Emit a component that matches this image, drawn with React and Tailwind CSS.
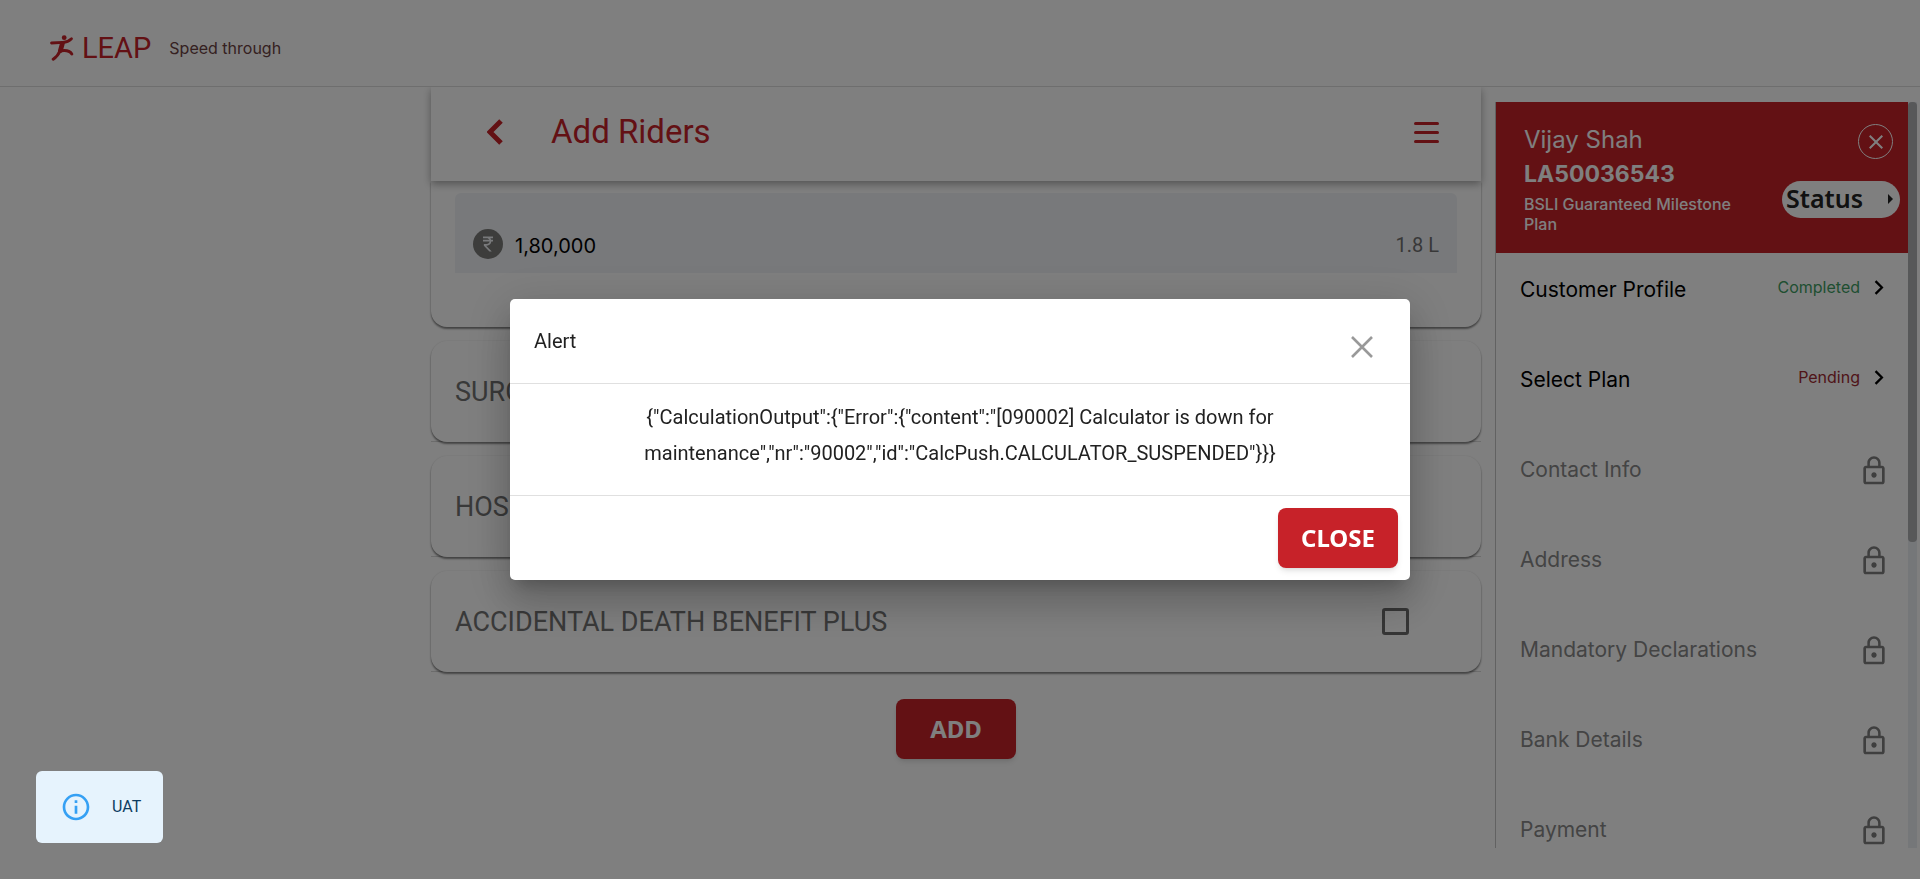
import React from "react";
import { MdClose, MdLockOutline, MdInfoOutline, MdCurrencyRupee } from "react-icons/md";

const MENU = [
  { label: "Customer Profile", status: "Completed" },
  { label: "Select Plan", status: "Pending" },
  { label: "Contact Info" },
  { label: "Address" },
  { label: "Mandatory Declarations" },
  { label: "Bank Details" },
  { label: "Payment" },
];

const RIDERS = ["SURGICAL CARE", "HOSPITAL CARE", "ACCIDENTAL DEATH BENEFIT PLUS"];

const display = "font-['Roboto',sans-serif]";
const humanist = "font-['Noto_Sans',sans-serif]";

function Chevron({ className, flip }) {
  return (
    <svg viewBox="0 0 16 26" className={className} fill="none" stroke="currentColor" strokeWidth={flip ? 4 : 5} aria-hidden="true">
      <path d={flip ? "M2 2 L13 13 L2 24" : "M14 2 L3 13 L14 24"} />
    </svg>
  );
}

function Runner() {
  return (
    <svg viewBox="0 0 24 26" className="h-[26px] w-6" fill="none" stroke="currentColor" strokeLinecap="round" strokeLinejoin="round" aria-hidden="true">
      <circle cx="14.2" cy="2.7" r="2.4" fill="currentColor" stroke="none" />
      <path d="M1.5 8 L13 7.4 Q18 7.2 21.5 3.8" strokeWidth="2.8" />
      <path d="M12.4 8.4 L10.4 15.6" strokeWidth="4.8" />
      <path d="M10.2 15.5 Q8 21 3.2 24.2" strokeWidth="3" />
      <path d="M11 15.8 Q19 14.5 21.8 19" strokeWidth="3" />
    </svg>
  );
}

function Header() {
  return (
    <header className="flex h-[87px] items-center border-b border-[#dcdcdc] px-[50px] pt-2.5">
      <div className="flex items-center gap-2 text-[#c72229]">
        <Runner />
        <span className={`${display} text-[29px] leading-9`}>LEAP</span>
      </div>
      <p className="ml-[18px] text-base text-[#6b4242]">Speed through</p>
    </header>
  );
}

function Rider({ name }) {
  return (
    <div className="h-[101px] border-b border-[#d8d8d8]">
      <label className="flex h-[101px] items-center justify-between rounded-2xl bg-white pl-6 pr-[72px] shadow-[0_2px_2px_rgba(0,0,0,0.45),0_0_2px_rgba(0,0,0,0.12)]">
        <span className={`${display} pt-0.5 text-[27px] text-[#737373]`}>{name}</span>
        <input type="checkbox" className="size-[27px] appearance-none rounded-[3px] border-3 border-[#6b6b6b]" />
      </label>
    </div>
  );
}

function Riders() {
  return (
    <main className="ml-[431px] mr-3.5 flex min-w-0 flex-1 flex-col">
      <div className="relative flex h-[94px] items-center bg-white pl-14 pr-[42px] pb-1 text-[#c72229] shadow-[0_3px_8px_rgba(0,0,0,0.35)] [clip-path:inset(0_-10px_-12px_-10px)]">
        <button aria-label="Back" className="flex">
          <Chevron className="h-[26px] w-4" />
        </button>
        <h1 className={`${display} ml-12 flex-1 text-[33px] leading-11`}>Add Riders</h1>
        <button aria-label="Menu" className="flex flex-col gap-1.5">
          <span className="h-[3px] w-[25px] rounded-full bg-current" />
          <span className="h-[3px] w-[25px] rounded-full bg-current" />
          <span className="h-[3px] w-[25px] rounded-full bg-current" />
        </button>
      </div>
      <section className="h-[146px] rounded-b-2xl px-6 pt-3 shadow-[0_2px_2px_rgba(0,0,0,0.45),0_0_2px_rgba(0,0,0,0.12)]">
        <div className="flex h-20 items-end rounded-t-md bg-[#f0f3f6] px-[18px] pb-3.5">
          <span className="flex size-[30px] items-center justify-center rounded-full bg-[#7a7a78] text-[#f0f3f6]">
            <MdCurrencyRupee className="size-5" />
          </span>
          <input aria-label="Sum assured" defaultValue="1,80,000" className="ml-3 h-[26px] min-w-0 flex-1 bg-transparent text-xl text-black" />
          <span className={`${display} text-xl leading-7 text-[#707070]`}>1.8 L</span>
        </div>
      </section>
      <div className="mt-3.5 flex flex-col gap-3.5">
        {RIDERS.map((name) => (
          <Rider key={name} name={name} />
        ))}
      </div>
      <button className={`${humanist} mt-[27px] h-[60px] w-[120px] self-center rounded-lg bg-[#c72229] text-2xl font-bold text-white shadow-md`}>
        ADD
      </button>
    </main>
  );
}

function Sidebar() {
  return (
    <aside className="mr-[3px] mt-[15px] flex h-[calc(100vh-133px)] w-[422px] border-l border-[#c4c4c4]">
      <div className="min-w-0 flex-1 overflow-hidden">
        <div className="flex h-[151px] justify-between bg-[#c72229] pb-4 pl-7 pr-2 pt-[22px] text-white">
          <div className="w-[220px]">
            <p className="text-2xl leading-8">Vijay Shah</p>
            <p className="text-[23px] font-bold leading-9">LA50036543</p>
            <p className="mt-0.5 text-base font-medium leading-5">BSLI Guaranteed Milestone Plan</p>
          </div>
          <div className="flex flex-col items-end gap-[22px]">
            <button aria-label="Close panel" className="mr-[7px] flex size-[35px] items-center justify-center rounded-full border border-white">
              <MdClose className="size-6" />
            </button>
            <button className={`${humanist} flex h-[37px] w-[118px] items-center justify-between rounded-full bg-white pb-0.5 pl-1 pr-[7px] text-[25px] font-semibold text-[#222]`}>
              Status
              <svg viewBox="0 0 5 10" className="h-2.5 w-[5px]" fill="currentColor" aria-hidden="true">
                <path d="M0 0 L5 5 L0 10z" />
              </svg>
            </button>
          </div>
        </div>
        <ul>
          {MENU.map(({ label, status }) => (
            <li key={label}>
              <a href="#step" className={`flex h-[90px] items-start justify-between pl-6 pt-5 ${status ? "pr-6 text-black" : "pr-[18px] text-[#888]"}`}>
                <span className="pt-px text-[21px] leading-8">{label}</span>
                {status ? (
                  <span className="flex h-7 items-center gap-3.5">
                    <span className={status === "Completed" ? "text-base text-[#3f9e63]" : "text-base text-[#a02a32]"}>{status}</span>
                    <Chevron flip className="h-[15px] w-2.5" />
                  </span>
                ) : (
                  <MdLockOutline className="mt-0.5 size-8 text-[#7e7e7e]" />
                )}
              </a>
            </li>
          ))}
        </ul>
      </div>
      <div className="w-[9px] bg-[#ebeef2]">
        <div className="h-[59%] rounded bg-[#aeb0b3]" />
      </div>
    </aside>
  );
}

function AlertDialog() {
  return (
    <div className="fixed inset-0 flex items-center justify-center bg-black/50">
      <div
        role="dialog"
        aria-label="Alert"
        className="w-[900px] rounded-[5px] bg-white text-[#212121] shadow-[0_11px_15px_-7px_rgba(0,0,0,0.2),0_24px_38px_3px_rgba(0,0,0,0.14),0_9px_46px_8px_rgba(0,0,0,0.12)]"
      >
        <div className="flex h-[85px] items-center justify-between border-b border-[#e0e0e0] pl-6 pr-[34px]">
          <h2 className={`${display} text-xl`}>Alert</h2>
          <button aria-label="Close dialog" className="mt-3 flex text-[#999]">
            <svg viewBox="0 0 28 28" className="size-7" fill="none" stroke="currentColor" strokeWidth="2.6" aria-hidden="true">
              <path d="M4 4 L24 24 M24 4 L4 24" />
            </svg>
          </button>
        </div>
        <p className={`${display} px-30 pb-6 pt-[15px] text-center text-xl leading-9`}>
          {'{"CalculationOutput":{"Error":{"content":"[090002] Calculator is down for maintenance","nr":"90002","id":"CalcPush.CALCULATOR_SUSPENDED"}}}'}
        </p>
        <div className="flex justify-end border-t border-[#e0e0e0] p-3">
          <button className={`${humanist} h-[60px] w-[120px] rounded-lg bg-[#c72229] text-2xl font-bold text-white shadow-md`}>
            CLOSE
          </button>
        </div>
      </div>
    </div>
  );
}

export default function App() {
  return (
    <div className="h-screen overflow-hidden bg-white font-['Inter',sans-serif]">
      <Header />
      <div className="flex items-start">
        <Riders />
        <Sidebar />
      </div>
      <AlertDialog />
      <div role="status" className="fixed bottom-9 left-9 flex h-[72px] w-[127px] items-center gap-5 rounded-md bg-[#e6f3fd] pl-6 text-[#0d3c61]">
        <MdInfoOutline className="size-8 shrink-0 text-[#35a0f4]" />
        <span className={`${display} text-base`}>UAT</span>
      </div>
    </div>
  );
}
